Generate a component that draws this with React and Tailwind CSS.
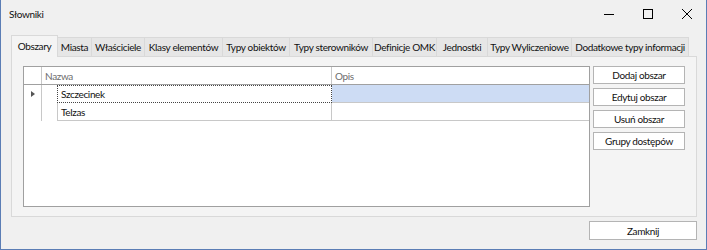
import { useState } from "react"

const tabs = [
  { name: "Obszary", w: "w-[47px]" },
  { name: "Miasta", w: "w-[35px]" },
  { name: "Właściciele", w: "w-[54px]" },
  { name: "Klasy elementów", w: "w-[79px]" },
  { name: "Typy obiektów", w: "w-[68px]" },
  { name: "Typy sterowników", w: "w-[84px]" },
  { name: "Definicje OMK", w: "w-[65px]" },
  { name: "Jednostki", w: "w-[52px]" },
  { name: "Typy Wyliczeniowe", w: "w-[85px]" },
  { name: "Dodatkowe typy informacji", w: "w-[118px]" },
]

const rows = [
  { nazwa: "Szczecinek", opis: "" },
  { nazwa: "Telzas", opis: "" },
]

function WindowButtons() {
  return (
    <div className="ml-auto flex h-full">
      <div className="flex w-[39px] items-center justify-center">
        <svg width="10" height="10" viewBox="0 0 10 10">
          <path d="M0 5.5H10" stroke="#000" strokeWidth="1" />
        </svg>
      </div>
      <div className="flex w-[39px] items-center justify-center">
        <svg width="10" height="10" viewBox="0 0 10 10">
          <rect x="0.5" y="0.5" width="9" height="9" fill="none" stroke="#000" strokeWidth="1" />
        </svg>
      </div>
      <div className="flex w-[39px] items-center justify-center">
        <svg width="10" height="10" viewBox="0 0 10 10">
          <path d="M0 0L10 10M10 0L0 10" stroke="#000" strokeWidth="1" />
        </svg>
      </div>
    </div>
  )
}

function DataGrid({ selected }) {
  return (
    <div className="flex h-[141px] w-[567px] flex-col border border-[#a0a0a0] bg-white">
      <div className="flex h-[18px] border-b border-[#a0a0a0] text-[#6d6d6d]">
        <div className="w-[18px] border-r border-[#c8c8c8]" />
        <div className="flex w-[290px] items-center border-r border-[#c8c8c8] pl-[3px]">Nazwa</div>
        <div className="flex flex-1 items-center pl-[3px]">Opis</div>
      </div>
      {rows.map((r, i) => (
        <div key={r.nazwa} className="flex h-[18px]">
          <div className="flex w-[18px] items-center justify-center border-r border-[#c8c8c8]">
            {i === selected && (
              <svg width="4" height="6" viewBox="0 0 4 6">
                <path d="M0 0L4 3L0 6Z" fill="#555" />
              </svg>
            )}
          </div>
          <div className="w-[15px]" />
          <div
            className={
              i === selected
                ? "flex w-[275px] items-center border border-dotted border-[#444] pl-[3px]"
                : "flex w-[275px] items-center border-x border-b border-[#c8c8c8] pl-[3px]"
            }
          >
            {r.nazwa}
          </div>
          <div
            className={
              i === selected
                ? "flex flex-1 items-center border-b border-[#c8c8c8] bg-[#cddcf4] pl-[3px]"
                : "flex flex-1 items-center border-b border-[#c8c8c8] pl-[3px]"
            }
          >
            {r.opis}
          </div>
        </div>
      ))}
    </div>
  )
}

export default function App() {
  const [active, setActive] = useState(0)
  const [selected, setSelected] = useState(0)

  return (
    <div className="flex h-[250px] w-[707px] flex-col overflow-hidden border-x border-b border-[#5b7db5] bg-[#f0f0f0] font-['Lato','Liberation_Sans',Arial,sans-serif] text-[10px] leading-none tracking-[-0.35px] text-[#111]">
      <div className="flex h-[28px] items-center">
        <span className="pl-[8px]">Słowniki</span>
        <WindowButtons />
      </div>

      <div className="mt-[7px] ml-[10px] flex h-[21px] items-end">
        {tabs.map((t, i) =>
          i === active ? (
            <div
              key={t.name}
              onClick={() => setActive(i)}
              className={`relative z-10 mb-[-1px] flex h-[22px] ${t.w} items-center justify-center border-x border-t border-[#d9d9d9] bg-[#f4f4f4] pb-[1px] whitespace-nowrap`}
            >
              {t.name}
            </div>
          ) : (
            <div
              key={t.name}
              onClick={() => setActive(i)}
              className={`-ml-px flex h-[19px] ${t.w} items-center justify-center border-x border-t border-[#d9d9d9] bg-[#e6e6e6] whitespace-nowrap`}
            >
              {t.name}
            </div>
          ),
        )}
      </div>

      <div className="ml-[10px] flex h-[161px] w-[686px] gap-[3px] border border-[#d9d9d9] bg-[#f4f4f4] px-[11px] pt-[9px]">
        <DataGrid selected={selected} />
        <div className="flex w-[92px] flex-col gap-[4px]">
          {["Dodaj obszar", "Edytuj obszar", "Usuń obszar", "Grupy dostępów"].map((b) => (
            <button
              key={b}
              className="flex h-[18px] items-center justify-center border border-[#b4b4b4] bg-white whitespace-nowrap"
              onClick={() => setSelected((selected + 1) % rows.length)}
            >
              {b}
            </button>
          ))}
        </div>
      </div>

      <div className="mt-[4px] flex pr-[9px]">
        <button className="ml-auto flex h-[19px] w-[108px] items-center justify-center border border-[#b4b4b4] bg-white">
          Zamknij
        </button>
      </div>
    </div>
  )
}
